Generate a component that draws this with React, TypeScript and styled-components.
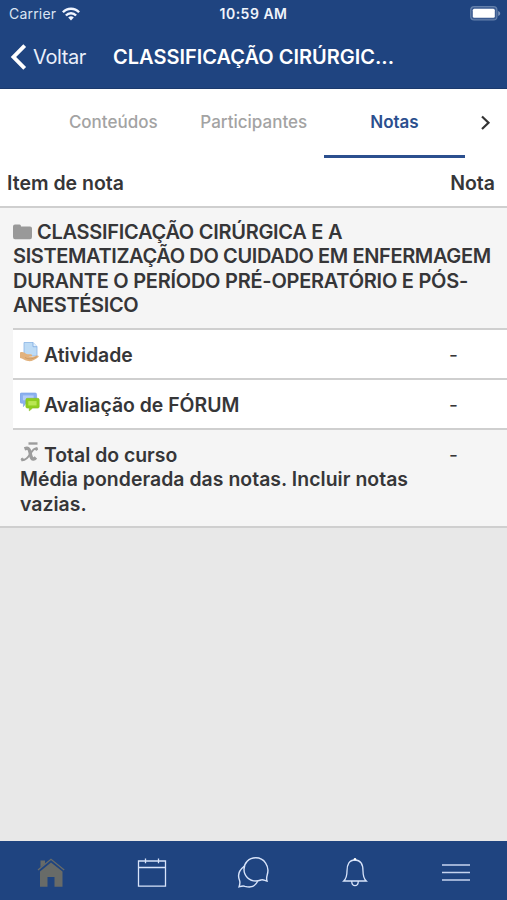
import React from 'react';
import styled, { createGlobalStyle } from 'styled-components';

const GlobalStyle = createGlobalStyle`
  *, *::before, *::after { box-sizing: border-box; }
  body { margin: 0; font-family: Inter, "Liberation Sans", sans-serif; }
  svg { display: block; }
`;

const Screen = styled.div`
  display: flex;
  flex-direction: column;
  width: 507px;
  height: 900px;
  overflow: hidden;
  background: #e8e8e8;
  color: #363638;
`;

const Header = styled.header`
  height: 89px;
  background: #1f4480;
  border-bottom: 1px solid #1b3a6d;
  color: #fff;
`;

const StatusBar = styled.div`
  display: grid;
  grid-template-columns: 1fr auto 1fr;
  align-items: center;
  height: 27px;
  padding: 0 6px 0 9px;
`;

const Carrier = styled.div`
  display: flex;
  align-items: center;
  gap: 6px;
  font-size: 14px;
  letter-spacing: 0.2px;
  color: #dbe4f3;
`;

const Clock = styled.div`
  font-size: 14px;
  font-weight: 600;
  letter-spacing: 0.5px;
  margin-left: -3px;
  color: #f0f4fb;
`;

const Battery = styled.div`
  display: flex;
  justify-content: flex-end;
`;

const NavBar = styled.div`
  display: flex;
  align-items: center;
  height: 60px;
  padding-left: 10px;
`;

const BackButton = styled.button`
  display: flex;
  align-items: center;
  gap: 6px;
  width: 103px;
  padding: 0;
  border: 0;
  background: none;
  color: #e9effa;
  font: 400 20px/24px Inter, "Liberation Sans", sans-serif;
  letter-spacing: -0.4px;
`;

const Title = styled.h1`
  margin: 0;
  font-size: 20px;
  line-height: 24px;
  font-weight: 600;
  letter-spacing: 0;
  white-space: nowrap;
`;

const Tabs = styled.nav`
  display: flex;
  height: 69px;
  padding-left: 43px;
  background: #fff;
`;

const Tab = styled.div<{ $active?: boolean }>`
  display: flex;
  justify-content: center;
  width: ${p => (p.$active ? 141 : 140.5)}px;
  height: 69px;
  padding-top: 22px;
  border-bottom: 3px solid ${p => (p.$active ? '#2b4f8e' : 'transparent')};
  color: ${p => (p.$active ? '#2b4f8e' : '#a3a3a3')};
  font-size: 17px;
  line-height: 22px;
  font-weight: ${p => (p.$active ? 600 : 500)};
`;

const TabArrow = styled.div`
  flex: 1;
  padding: 26px 0 0 14.5px;
`;

const TableHead = styled.div`
  display: flex;
  justify-content: space-between;
  height: 50px;
  padding: 13px 12px 0 7px;
  background: #fff;
  border-bottom: 2px solid #cfcfcf;
  font-size: 19.5px;
  line-height: 24px;
  font-weight: 600;
`;

const GradeTable = styled.div`
  padding-left: 13px;
  background: #f5f5f5;
  border-bottom: 2px solid #cfcfcf;
`;

const CategoryRow = styled.div`
  height: 120px;
  padding-top: 12px;
  font-size: 20px;
  line-height: 24.3px;
  font-weight: 600;
  white-space: nowrap;
`;

const GradeRow = styled.div<{ $height: number; $total?: boolean }>`
  display: flex;
  height: ${p => p.$height}px;
  padding: 13px 0 0 7px;
  border-top: 2px solid #cfcfcf;
  background: ${p => (p.$total ? '#f5f5f5' : '#fff')};
  font-size: 19.4px;
  line-height: 24.3px;
`;

const ItemName = styled.div`
  width: 429px;
  font-weight: 600;
  white-space: nowrap;
`;

const ItemLine = styled.div`
  display: flex;
  gap: 4px;
`;

const IconSlot = styled.span`
  width: 20px;
  height: 20px;
  margin-top: -1px;
  flex: none;
`;

const InlineIcon = styled.span`
  display: inline-block;
  width: 19px;
  height: 16px;
  margin-right: 5px;
  vertical-align: -1px;
`;

const TabBar = styled.nav`
  display: grid;
  grid-template-columns: repeat(5, 1fr);
  justify-items: center;
  height: 59px;
  margin-top: auto;
  padding-top: 16px;
  background: #1f4480;
`;

const CategoryLine = styled.div<{ $spacing: number }>`
  letter-spacing: ${p => p.$spacing}px;
`;

const Description = styled.div<{ $spacing?: number }>`
  letter-spacing: 0.05px;
`;

const WifiIcon = () => (
  <svg width="18" height="14" viewBox="0 0 18 14" fill="none" stroke="#f0f5ff" strokeWidth="2.4">
    <path d="M.9 5.3C5.3.5 12.700.5 17.100 5.300" />
    <path d="M3.900 8.500c2.800-3 7.400-3 10.200 0" />
    <path d="M6.200 10.500a4 4 0 0 1 5.600 0L9 13.600z" fill="#f0f5ff" stroke="none" />
  </svg>
);

const BatteryIcon = () => (
  <svg width="31" height="15" viewBox="0 0 31 15">
    <rect x=".7" y=".7" width="26.200" height="13.200" rx="3.500" fill="#3b5b91" stroke="#6480ab" strokeWidth="1.200" />
    <rect x="2.800" y="2.800" width="22" height="9" rx="1.500" fill="#fff" />
    <path d="M28.200 5v5c1.200-.4 2-1.300 2-2.500S29.400 5.400 28.200 5z" fill="#7d94b9" />
  </svg>
);

const BackIcon = () => (
  <svg width="17" height="26" viewBox="0 0 17 26" fill="none" stroke="#fff" strokeWidth="3.900">
    <path d="M14.700 1.700 3.500 13l11.200 11.300" />
  </svg>
);

const FolderIcon = () => (
  <svg width="19" height="16" viewBox="0 0 19 16">
    <path d="M0 2.500Q0 .5 2 .5h4.500q1.500 0 1.500 2h9q2 0 2 2V13q0 2.300-2 2.300H2Q0 15.300 0 13z" fill="#999" />
  </svg>
);

const AssignmentIcon = () => (
  <svg width="20" height="20" viewBox="0 0 20 20">
    <path d="M4 .5h9l4 4.200V14H4z" fill="#bddbf5" stroke="#8ab4e5" strokeWidth=".8" />
    <path d="M13 .5v4.200h4" fill="#e5f2fd" stroke="#79a7df" strokeWidth=".8" />
    <path d="M0 10.500c2.500-1.200 4-.1 6 1.300 2 .9 4.300.3 5.500.8 1.200.7.700 1.800-.5 2l-2.500.2c4 .7 6.200-.8 8.300-1.300 1.700-.3 2.500.7 1.600 1.500-3.400 2.900-6.800 4.600-10.400 4.100C5 18.500 2.500 16.400 0 16z" fill="#e2b27d" />
    <path d="M5 15.500c3.500 2 7 1.800 11.800-.7" fill="none" stroke="#c4905a" strokeWidth=".7" />
  </svg>
);

const ForumIcon = () => (
  <svg width="20" height="20" viewBox="0 0 20.500 19.500">
    <path d="M1.500.5h14q1.500 0 1.500 1.500v7.500q0 1.500-1.500 1.500H6L3.500 14.500V11h-2Q0 11 0 9.500V2Q0 .5 1.500.5z" fill="#8bb0ef" stroke="#759ee5" strokeWidth=".6" />
    <path d="M3 3h11v5H3z" fill="#b3cdf8" />
    <path d="M7.500 6h10.700q1.500 0 1.500 1.500v7q0 1.500-1.500 1.500H13l-3.500 2.800V16h-2Q6 16 6 14.500v-7Q6 6 7.500 6z" fill="#8fce1f" stroke="#85bd24" strokeWidth=".6" />
    <path d="M8.500 8.800H17v4.500H8.500z" fill="#b9e653" />
  </svg>
);

const MeanIcon = () => (
  <svg width="20" height="20" viewBox="0 0 20 20" fill="none" stroke="#9c9c9c">
    <path d="M8.500 1.500h9" strokeWidth="2.400" />
    <path d="M4.500 6.800c3.500-1.300 4.700-.4 5.500 3.400.8 5 2 9.300 5.900 5.300" strokeWidth="3.400" />
    <path d="M17.500 6.300c-3-.8-5.200 2-7.200 5.500s-5 7-8.800 6.400" strokeWidth="1.900" />
    <circle cx="16.400" cy="7.200" r="1.100" fill="#9c9c9c" />
    <circle cx="2.300" cy="17.300" r="1.100" fill="#9c9c9c" />
  </svg>
);

const ChevronIcon = () => (
  <svg width="12" height="16" viewBox="0 0 12 16" fill="none" stroke="#333" strokeWidth="2.200">
    <path d="m2 1.500 6.500 6.200L2 14" />
  </svg>
);

const HomeIcon = () => (
  <svg width="30" height="32" viewBox="0 0 30 32" fill="#686b68">
    <path d="M4.500 3.500H9v3.200L4.500 10.500zM4 14.500 15 5.500 26.500 14.500v15.200h-8V20h-7v9.700H4z" />
    <path d="M2 13 15 2.300l13.200 10.700" fill="none" stroke="#686b68" strokeWidth="1.300" />
  </svg>
);

const CalendarIcon = () => (
  <svg width="30" height="32" viewBox="0 0 30 32" fill="none" stroke="#d8e4fa" strokeWidth="1.300">
    <path d="M1.500 4h27v25.200h-27zM1.500 10.500h27M8.500 1.500v4.800M21.500 1.500v4.800" />
  </svg>
);

const ChatIcon = () => (
  <svg width="32" height="32" viewBox="0 0 32 32" fill="none" stroke="#d8e4fa" strokeWidth="1.400">
    <path d="M30 24c-.6-2-.4-4 .2-6 2.800-9-3.200-17.200-11.400-17.200C11.600.8 7 6.200 7 12.300 7 19 12.200 24 19 24c2.300 0 4-.7 6-1.300 1.600-.1 3 .8 5 1.300z" />
    <path d="M7.200 9.200c-4.900 3.800-6.800 8.900-4.700 14 .8 2 .3 4.500-.4 6.600 2.200-.6 3.900-1.200 5.900-.5 5.600 1.800 10.200 0 12.700-5" />
  </svg>
);

const BellIcon = () => (
  <svg width="28" height="32" viewBox="0 0 28 32" fill="none" stroke="#d8e4fa" strokeWidth="1.300">
    <path d="M2.700 24c3.200-3 3.300-6 3.300-10 0-6.200 2-11 8-11s8 4.800 8 11c0 4 .1 7 3.300 10zM10.700 24.500c.3 5.500 6.300 5.500 6.600 0" />
    <circle cx="14" cy="2.200" r="1.300" fill="#fff" stroke="none" />
  </svg>
);

const MenuIcon = () => (
  <svg width="30" height="32" viewBox="0 0 30 32" fill="none" stroke="#c6d4ef" strokeWidth="1.600">
    <path d="M1 8h28M1 15.500h28M1 23h28" />
  </svg>
);

const categoryLines = [
  { text: 'SISTEMATIZAÇÃO DO CUIDADO EM ENFERMAGEM', spacing: -0.38 },
  { text: 'DURANTE O PERÍODO PRÉ-OPERATÓRIO E PÓS-', spacing: -0.25 },
  { text: 'ANESTÉSICO', spacing: -0.35 },
];

export default function App() {
  return (
    <>
      <GlobalStyle />
      <Screen>
        <Header>
          <StatusBar>
            <Carrier>Carrier <WifiIcon /></Carrier>
            <Clock>10:59 AM</Clock>
            <Battery><BatteryIcon /></Battery>
          </StatusBar>
          <NavBar>
            <BackButton><BackIcon />Voltar</BackButton>
            <Title>CLASSIFICAÇÃO CIRÚRGIC...</Title>
          </NavBar>
        </Header>
        <Tabs>
          <Tab>Conteúdos</Tab>
          <Tab>Participantes</Tab>
          <Tab $active>Notas</Tab>
          <TabArrow><ChevronIcon /></TabArrow>
        </Tabs>
        <TableHead><span>Item de nota</span><span>Nota</span></TableHead>
        <GradeTable>
          <CategoryRow>
            <CategoryLine $spacing={-0.28}><InlineIcon><FolderIcon /></InlineIcon>CLASSIFICAÇÃO CIRÚRGICA E A</CategoryLine>
            {categoryLines.map(line => (
              <CategoryLine key={line.text} $spacing={line.spacing}>{line.text}</CategoryLine>
            ))}
          </CategoryRow>
          <GradeRow $height={50}>
            <ItemName><ItemLine><IconSlot><AssignmentIcon /></IconSlot>Atividade</ItemLine></ItemName>
            <span>-</span>
          </GradeRow>
          <GradeRow $height={50}>
            <ItemName><ItemLine><IconSlot><ForumIcon /></IconSlot>Avaliação de FÓRUM</ItemLine></ItemName>
            <span>-</span>
          </GradeRow>
          <GradeRow $height={98} $total>
            <ItemName>
              <ItemLine><IconSlot><MeanIcon /></IconSlot>Total do curso</ItemLine>
              <Description>Média ponderada das notas. Incluir notas<br />vazias.</Description>
            </ItemName>
            <span>-</span>
          </GradeRow>
        </GradeTable>
        <TabBar>
          <HomeIcon />
          <CalendarIcon />
          <ChatIcon />
          <BellIcon />
          <MenuIcon />
        </TabBar>
      </Screen>
    </>
  );
}
